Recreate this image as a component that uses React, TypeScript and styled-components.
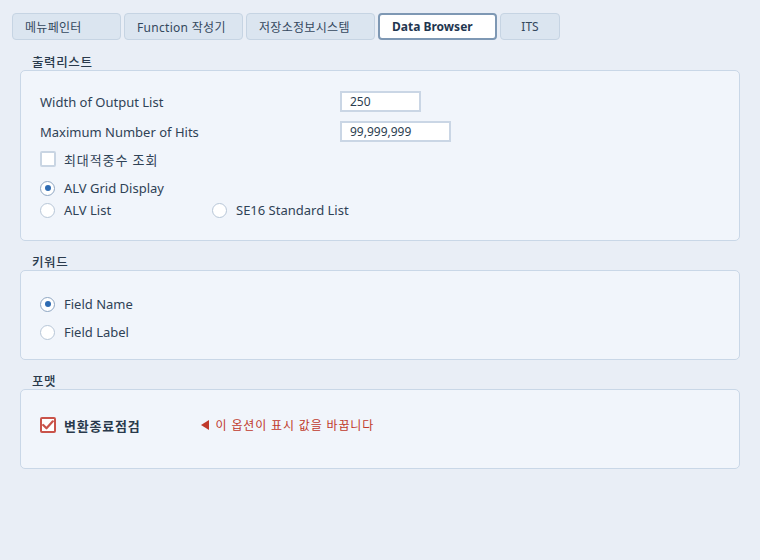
import React from "react";
import styled, { createGlobalStyle } from "styled-components";

const Global = createGlobalStyle`
  html, body { margin: 0; padding: 0; background: #e9eef6; }
  body { font-family: "Noto Sans", "Noto Sans CJK KR", sans-serif; color: #2c3d50; }
  * { box-sizing: border-box; }
`;

const Page = styled.div`
  width: 760px;
  height: 560px;
  background: #e9eef6;
  padding: 13px 20px 0 12px;
  display: flex;
  flex-direction: column;
`;

const TabBar = styled.div`
  display: flex;
  gap: 3px;
  height: 27px;
`;

const Tab = styled.div<{ $w: number; $active?: boolean; $center?: boolean }>`
  width: ${(p) => p.$w}px;
  height: 27px;
  display: flex;
  align-items: center;
  justify-content: ${(p) => (p.$center ? "center" : "flex-start")};
  padding-left: ${(p) => (p.$center ? 0 : 12)}px;
  font-size: 12px;
  letter-spacing: ${(p) => (p.$active || p.$center ? 0 : 0.3)}px;
  font-weight: ${(p) => (p.$active ? 700 : 400)};
  color: ${(p) => (p.$active ? "#1f3650" : "#34485e")};
  background: ${(p) => (p.$active ? "#ffffff" : "#dbe5f0")};
  border: ${(p) => (p.$active ? "2px solid #7e98b4" : "1px solid #c6d4e3")};
  border-radius: 4px;
  white-space: nowrap;
`;

const Sections = styled.div`
  display: flex;
  flex-direction: column;
  gap: 13px;
  margin-top: 14px;
  padding-left: 8px;
`;

const Section = styled.section`
  display: flex;
  flex-direction: column;
`;

const SectionTitle = styled.div`
  font-size: 12.5px;
  font-weight: 500;
  letter-spacing: 0.6px;
  line-height: 18px;
  height: 16px;
  padding-left: 12px;
  color: #2a3a4c;
`;

const Panel = styled.div<{ $pt: number; $pb: number }>`
  background: #f1f5fb;
  border: 1px solid #c9d7e7;
  border-radius: 5px;
  padding: ${(p) => p.$pt}px 19px ${(p) => p.$pb}px 19px;
  display: flex;
  flex-direction: column;
`;

const FieldRow = styled.div<{ $mb?: number }>`
  display: grid;
  grid-template-columns: 300px auto;
  align-items: center;
  height: 21px;
  margin-bottom: ${(p) => p.$mb ?? 0}px;
`;

const Label = styled.span<{ $ko?: boolean }>`
  font-size: 13px;
  letter-spacing: ${(p) => (p.$ko ? 0.9 : 0)}px;
  color: #2f4256;
`;

const Input = styled.div<{ $w: number }>`
  width: ${(p) => p.$w}px;
  height: 21px;
  background: #ffffff;
  border: 2px solid #cad6e5;
  font-size: 12px;
  color: #2c3d50;
  padding-left: 8px;
  display: flex;
  align-items: center;
`;

const CheckRow = styled.label<{ $mb?: number }>`
  display: flex;
  align-items: center;
  gap: 8px;
  height: 22px;
  margin-bottom: ${(p) => p.$mb ?? 0}px;
`;

const CheckBox = styled.span<{ $checked?: boolean }>`
  width: 16px;
  height: 16px;
  border-radius: 2px;
  border: 2px solid ${(p) => (p.$checked ? "#c9534a" : "#c9d5e3")};
  background: #ffffff;
  display: flex;
  align-items: center;
  justify-content: center;
`;

const StrongLabel = styled.span`
  font-size: 13px;
  font-weight: 700;
  letter-spacing: 0.8px;
  color: #2a3a4c;
`;

const RadioGrid = styled.div`
  display: grid;
  grid-template-columns: 172px auto;
  grid-auto-rows: 22px;
`;

const RadioList = styled.div`
  display: flex;
  flex-direction: column;
  gap: 6px;
`;

const RadioItem = styled.label`
  display: flex;
  align-items: center;
  gap: 9px;
  height: 22px;
`;

const Radio = styled.span<{ $on?: boolean }>`
  width: 15px;
  height: 15px;
  border-radius: 50%;
  border: 1.5px solid ${(p) => (p.$on ? "#8ea6c2" : "#b7c6d7")};
  background: #ffffff;
  display: flex;
  align-items: center;
  justify-content: center;
  &::after {
    content: "";
    width: 6px;
    height: 6px;
    border-radius: 50%;
    background: ${(p) => (p.$on ? "#2f6cb3" : "transparent")};
  }
`;

const Note = styled.span`
  display: flex;
  align-items: center;
  gap: 7px;
  margin-left: 52px;
  font-size: 12px;
  letter-spacing: 0.85px;
  color: #c0392b;
`;

const Arrow = styled.span`
  width: 0;
  height: 0;
  border-top: 5px solid transparent;
  border-bottom: 5px solid transparent;
  border-right: 8px solid #c0392b;
`;

export default function App() {
  return (
    <>
      <Global />
      <Page>
        <TabBar>
          <Tab $w={109}>메뉴페인터</Tab>
          <Tab $w={119}>Function 작성기</Tab>
          <Tab $w={129}>저장소정보시스템</Tab>
          <Tab $w={119} $active>
            Data Browser
          </Tab>
          <Tab $w={60} $center>
            ITS
          </Tab>
        </TabBar>
        <Sections>
          <Section>
            <SectionTitle>출력리스트</SectionTitle>
            <Panel $pt={20} $pb={19}>
              <FieldRow $mb={9}>
                <Label>Width of Output List</Label>
                <Input $w={81}>250</Input>
              </FieldRow>
              <FieldRow $mb={6}>
                <Label>Maximum Number of Hits</Label>
                <Input $w={111}>99,999,999</Input>
              </FieldRow>
              <CheckRow $mb={7}>
                <CheckBox />
                <Label $ko>최대적중수 조회</Label>
              </CheckRow>
              <RadioGrid>
                <RadioItem>
                  <Radio $on />
                  <Label>ALV Grid Display</Label>
                </RadioItem>
                <span />
                <RadioItem>
                  <Radio />
                  <Label>ALV List</Label>
                </RadioItem>
                <RadioItem>
                  <Radio />
                  <Label>SE16 Standard List</Label>
                </RadioItem>
              </RadioGrid>
            </Panel>
          </Section>
          <Section>
            <SectionTitle>키워드</SectionTitle>
            <Panel $pt={22} $pb={16}>
              <RadioList>
                <RadioItem>
                  <Radio $on />
                  <Label>Field Name</Label>
                </RadioItem>
                <RadioItem>
                  <Radio />
                  <Label>Field Label</Label>
                </RadioItem>
              </RadioList>
            </Panel>
          </Section>
          <Section>
            <SectionTitle>포맷</SectionTitle>
            <Panel $pt={24} $pb={32}>
              <CheckRow>
                <CheckBox $checked>
                  <svg width="12" height="10" viewBox="0 0 12 10">
                    <path
                      d="M1.2 5 L4.5 8.3 L10.8 1.3"
                      fill="none"
                      stroke="#c9534a"
                      strokeWidth="2.2"
                      strokeLinecap="round"
                      strokeLinejoin="round"
                    />
                  </svg>
                </CheckBox>
                <StrongLabel>변환종료점검</StrongLabel>
                <Note>
                  <Arrow />이 옵션이 표시 값을 바꿉니다
                </Note>
              </CheckRow>
            </Panel>
          </Section>
        </Sections>
      </Page>
    </>
  );
}
